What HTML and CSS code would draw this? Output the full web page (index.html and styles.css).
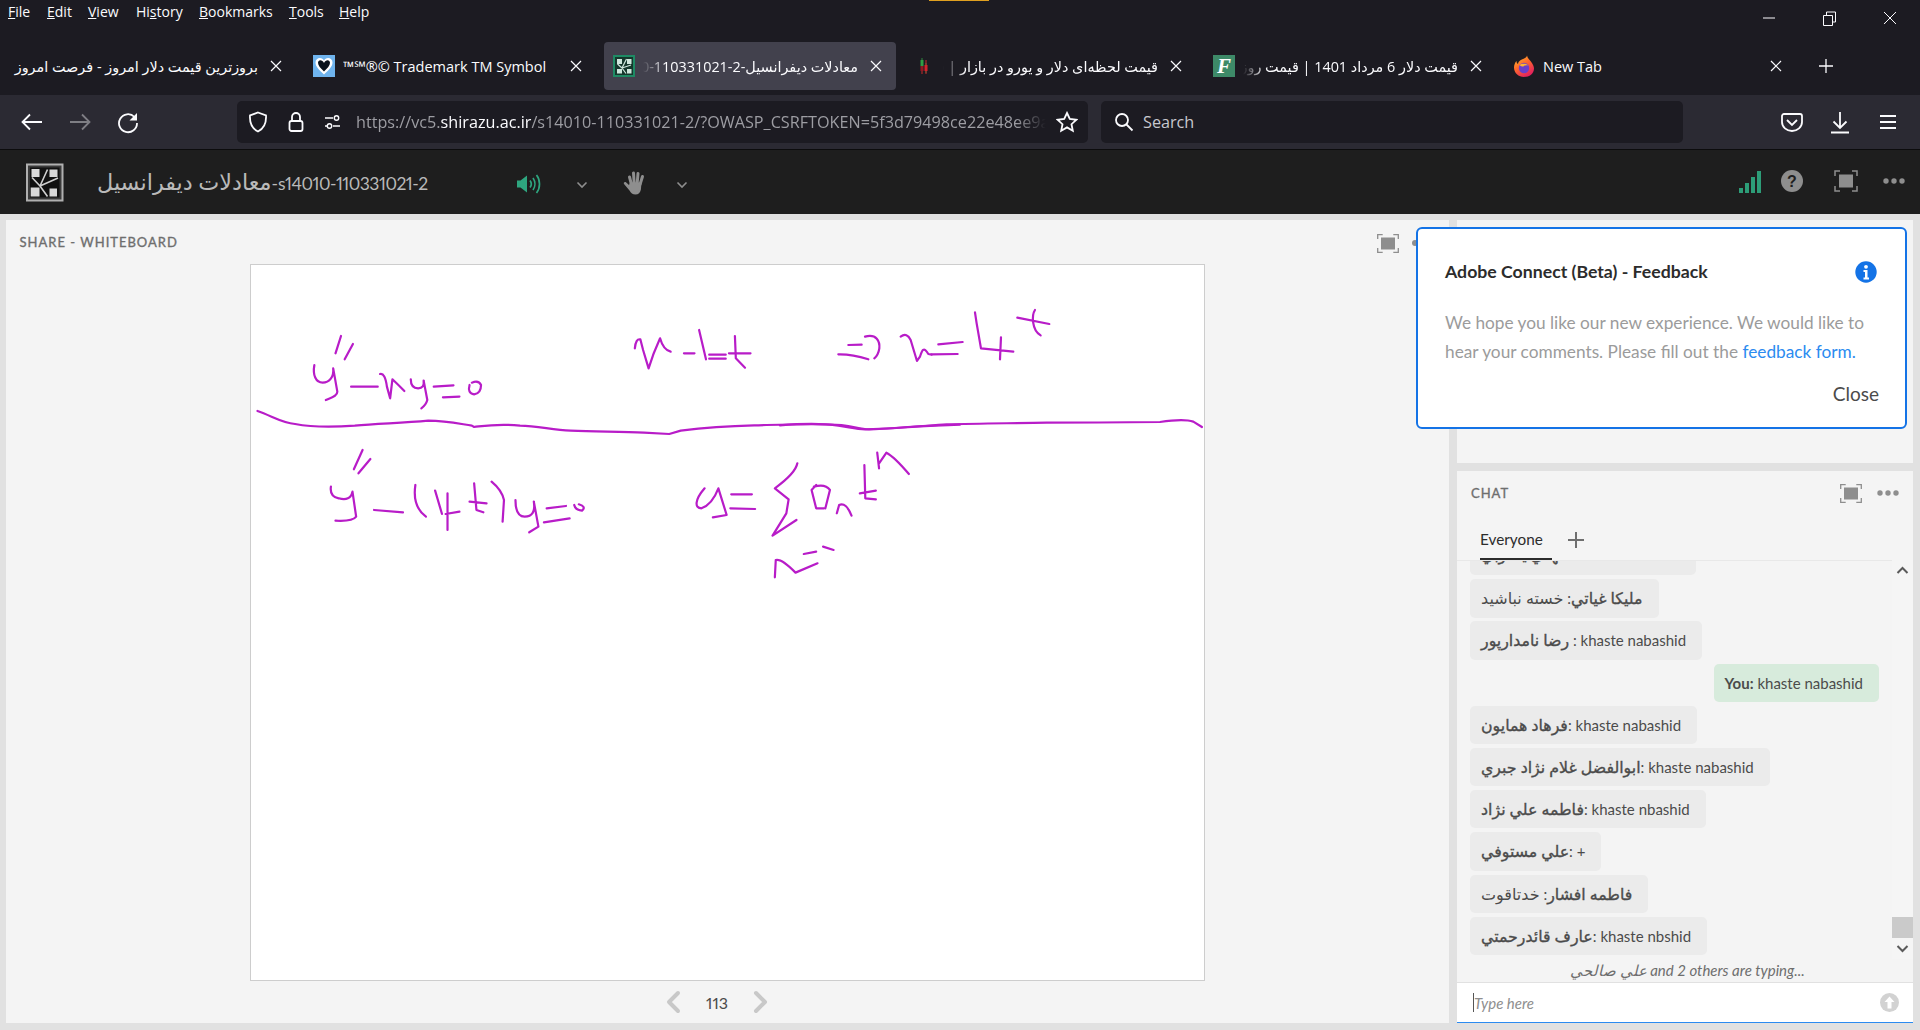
FILE: index.html
```html
<!DOCTYPE html>
<html lang="en">
<head>
<meta charset="utf-8">
<title>Adobe Connect</title>
<link rel="stylesheet" href="styles.css">
</head>
<body>
<div class="page">
  <div class="attention"></div>
  <div class="menubar">
    <nav class="menu">
      <span class="m-file"><u>F</u>ile</span><span class="m-edit"><u>E</u>dit</span><span class="m-view"><u>V</u>iew</span><span class="m-hist">Hi<u>s</u>tory</span><span class="m-book"><u>B</u>ookmarks</span><span class="m-tools"><u>T</u>ools</span><span class="m-help"><u>H</u>elp</span>
    </nav>
    <div class="winctl">
      <svg class="wbtn" viewBox="0 0 60 36"><path d="M23 18h12" class="w1"/></svg>
      <svg class="wbtn" viewBox="0 0 60 36"><path d="M23.500 15.500h9v10h-9zM26.500 15v-3h9v10h-3" class="w1"/></svg>
      <svg class="wbtn" viewBox="0 0 60 36"><path d="M24 12l12 12M36 12l-12 12" class="w1"/></svg>
    </div>
  </div>

  <div class="tabbar">
    <div class="tab">
      <div class="tab-title rtl fade">بروزترین قیمت دلار امروز - فرصت امروز</div>
      <svg class="tab-x" viewBox="0 0 12 12"><path d="M1 1l10 10M11 1L1 11"/></svg>
    </div>
    <div class="tab">
      <svg class="fav" viewBox="0 0 22 22"><rect width="22" height="22" fill="#6fb4ee"/><path d="M11 19.500C6 15 2.500 11.500 2.500 7.500 2.500 4.500 4.700 3 6.800 3 8.800 3 10.200 4 11 5.500 11.800 4 13.200 3 15.200 3 17.300 3 19.500 4.500 19.500 7.500 19.500 11.500 16 15 11 19.500z" fill="#fff"/><path d="M11 16.500C7.500 13.300 5 10.500 5 7.800 5 6 6.200 5.200 7.300 5.200 8.800 5.200 10.200 6.200 11 8 11.800 6.200 13.200 5.200 14.700 5.200 15.800 5.200 17 6 17 7.800 17 10.500 14.500 13.300 11 16.500z" fill="#08121c"/></svg>
      <div class="tab-title">™℠®© Trademark TM Symbol</div>
      <svg class="tab-x" viewBox="0 0 12 12"><path d="M1 1l10 10M11 1L1 11"/></svg>
    </div>
    <div class="tab active">
      <svg class="fav" viewBox="0 0 22 22"><rect width="22" height="22" fill="#1e8a64"/><rect x="2" y="2" width="18" height="18" fill="#16382d"/><path d="M4 4h5v5H4zM14 4h4.500v5H14zM4 14h5v4.500H4zM14 14h4.500v4.500H14z" fill="#cfe7dd"/><path d="M9 13L13.500 4M9 13l9-3M9 13L4.500 9M9 13l4 5.500" stroke="#cfe7dd" stroke-width="1.200" fill="none"/></svg>
      <div class="tab-title rtl fade">معادلات دیفرانسیل-s14010-110331021-2</div>
      <svg class="tab-x" viewBox="0 0 12 12"><path d="M1 1l10 10M11 1L1 11"/></svg>
    </div>
    <div class="tab">
      <svg class="fav" viewBox="0 0 22 22"><path d="M9 3v7M13 8v10" stroke="#2d8a3e" stroke-width="1"/><rect x="7.500" y="5" width="3" height="6" fill="#2f9e44"/><path d="M13 5v14M9 11v8" stroke="#c92a2a" stroke-width="1"/><rect x="11.500" y="10" width="3" height="6" fill="#d6222c"/><rect x="7.500" y="11" width="3" height="5" fill="#8f1a22"/></svg>
      <div class="tab-title rtl fade">قیمت لحظه‌ای دلار و یورو در بازار | قیمت روز</div>
      <svg class="tab-x" viewBox="0 0 12 12"><path d="M1 1l10 10M11 1L1 11"/></svg>
    </div>
    <div class="tab">
      <span class="fav fav-f">F</span>
      <div class="tab-title rtl fade">قیمت دلار 6 مرداد 1401 | قیمت روز ارز امروز</div>
      <svg class="tab-x" viewBox="0 0 12 12"><path d="M1 1l10 10M11 1L1 11"/></svg>
    </div>
    <div class="tab">
      <svg class="fav" viewBox="0 0 22 22"><defs><linearGradient id="ffo" x1="0" y1="0" x2="0.600" y2="1"><stop offset="0" stop-color="#ffc62b"/><stop offset=".5" stop-color="#ff6a2b"/><stop offset="1" stop-color="#e3215e"/></linearGradient></defs><path d="M14 .500c.500 2.500 2 3.500 3.500 5.500 2.500 3 3.500 5.500 3.500 7.500C21 18.500 16.500 22 11 22 5.500 22 1 18 1 12.500 1 10 2 7.500 3.500 6c0 1.500.500 2.500 1.500 3C5.500 5.500 9 4.500 11 3.500 12.500 2.800 13.800 2 14 .500z" fill="url(#ffo)"/><circle cx="11" cy="13" r="5.200" fill="#6b3fc9"/><path d="M6.500 10c2-1.500 6.500-2 9 .5-1.500-.500-4-.500-5 1-1.500 0-3-.500-4-1.500z" fill="#ffb52b"/></svg>
      <div class="tab-title">New Tab</div>
      <svg class="tab-x" viewBox="0 0 12 12"><path d="M1 1l10 10M11 1L1 11"/></svg>
    </div>
    <svg class="newtab" viewBox="0 0 16 16"><path d="M8 1v14M1 8h14"/></svg>
  </div>

  <div class="toolbar">
    <svg class="navbtn" viewBox="0 0 48 24"><path d="M34 12H15M22 4.500L14.500 12l7.500 7.500" class="tb"/></svg>
    <svg class="navbtn dim" viewBox="0 0 48 24"><path d="M14 12h19M26 4.500l7.500 7.500-7.500 7.500" class="tb"/></svg>
    <svg class="navbtn" viewBox="0 0 48 24"><path d="M30.500 7A9 9 0 1 0 33 13" class="tb"/><path d="M33 3v7.500h-7.500z" fill="#fbfbfe"/></svg>
    <div class="urlbar">
      <svg class="u-shield" viewBox="0 0 20 22"><path d="M10 1.500l8 3c.5 8-2 13-8 16-6-3-8.500-8-8-16z" class="tb"/></svg>
      <svg class="u-lock" viewBox="0 0 16 22"><path d="M4 10V6a4 4 0 0 1 8 0v4" class="tb"/><rect x="1.500" y="10" width="13" height="10" rx="2" class="tb"/></svg>
      <svg class="u-perm" viewBox="0 0 16 16"><path d="M1 4h8M1 12h2M9 12h7" class="tb t15"/><circle cx="12.500" cy="4" r="2.200" class="tb t15"/><circle cx="5.500" cy="12" r="2.200" class="tb t15"/></svg>
      <div class="url">https://vc5.<b>shirazu.ac.ir</b>/s14010-110331021-2/?OWASP_CSRFTOKEN=5f3d79498ce22e48ee9a31c</div>
      <svg class="u-star" viewBox="0 0 22 22"><path d="M11 2l2.800 6 6.500.8-4.800 4.400 1.300 6.500L11 16.400l-5.800 3.300 1.300-6.500L1.700 8.800 8.200 8z" class="tb"/></svg>
    </div>
    <div class="search">
      <svg class="s-lens" viewBox="0 0 20 20"><circle cx="8" cy="8" r="6" class="tb"/><path d="M12.500 12.500L18.500 18.500" class="tb"/></svg>
      <span>Search</span>
    </div>
    <div class="tb-right">
      <svg class="navbtn" viewBox="0 0 48 24"><path d="M16 4h16c1 0 2 .8 2 2v6c0 5-4.500 9-10 9s-10-4-10-9V6c0-1.200 1-2 2-2z" class="tb"/><path d="M19 10l5 5 5-5" class="tb"/></svg>
      <svg class="navbtn" viewBox="0 0 48 24"><path d="M24 2v16M17.500 11.500L24 18l6.500-6.500M15 22.500h18" class="tb"/></svg>
      <svg class="navbtn" viewBox="0 0 48 24"><path d="M16 6h16M16 12h16M16 18h16" class="tb"/></svg>
    </div>
  </div>

  <header class="acbar">
    <svg class="aclogo" viewBox="0 0 38 39"><rect x="1" y="1.500" width="35.500" height="36" fill="#3a3a3a" stroke="#b0b0b0" stroke-width="2"/><rect x="4" y="4.500" width="29.500" height="30" fill="#111"/><path d="M5.500 6h8v8h-8zM23.500 6.500h8v7.500h-8zM4.700 24.500h8.800v9H4.700zM23.500 25.500h7.500v8h-7.500z" fill="#d8d8d8"/><path d="M14 23L21.500 6.500M14 23L32 15M14 23L6 14.500M14 23L21.500 33.500" stroke="#cfcfcf" stroke-width="1.600" fill="none"/></svg>
    <div class="actitle"><span class="ac-ar">معادلات دیفرانسیل</span><span class="ac-num">-s14010-110331021-2</span></div>
    <svg class="speaker" viewBox="0 0 25 20"><path d="M1 6.500h3.500L11 1.500v17l-6.500-5H1z" fill="#2ea67f"/><path d="M14 6.500c1.500 2 1.500 5 0 7M17 4c2.500 3.500 2.500 8.500 0 12M20.500 1c4 5 4 13 0 18" fill="none" stroke="#2ea67f" stroke-width="1.700"/></svg>
    <svg class="chev c1" viewBox="0 0 12 8"><path d="M1.500 1.500L6 6l4.500-4.500"/></svg>
    <svg class="hand" viewBox="0 0 24 24"><path d="M6.500 6l2 7.500M10.500 2l.7 10M15 2.500l-.8 10M19.500 5.500L17 13.500" stroke="#8e8e8e" stroke-width="3" stroke-linecap="round" fill="none"/><path d="M7 11.500h11.500l-.6 7c-.5 3-2.500 5-5.400 5-3 0-4.500-1.500-6-4L1 13c-.8-1.500 1-2.700 2.200-1.500L6 14z" fill="#8e8e8e"/></svg>
    <svg class="chev c2" viewBox="0 0 12 8"><path d="M1.500 1.500L6 6l4.500-4.500"/></svg>
    <div class="acright">
      <svg class="bars" viewBox="0 0 22 22"><path d="M0 17h4v5H0zM6 12h4v10H6zM12 6h4v16h-4zM18 0h4v22h-4z" fill="#2d9d78"/></svg>
      <svg class="help" viewBox="0 0 22 22"><circle cx="11" cy="11" r="11" fill="#8e8e8e"/><text x="11" y="16.500" class="help-q">?</text></svg>
      <svg class="fs-dark" viewBox="0 0 24 22"><path d="M1 6V1h5M18 1h5v5M23 16v5h-5M6 21H1v-5" fill="none" stroke="#8e8e8e" stroke-width="1.500"/><rect x="5" y="4.500" width="14" height="13" fill="#8e8e8e"/></svg>
      <svg class="dots-dark" viewBox="0 0 22 6"><circle cx="3" cy="3" r="2.700"/><circle cx="11" cy="3" r="2.700"/><circle cx="19" cy="3" r="2.700"/></svg>
    </div>
  </header>

  <main class="stage">
    <section class="sharepod">
      <div class="podhead">
        <span class="podlabel">SHARE - WHITEBOARD</span>
        <svg class="fs" viewBox="0 0 22 19"><path d="M.7 5V.7h5M16.300.7h5V5M21.300 14v4.300h-5M5.700 18.300h-5V14" fill="none" stroke="#8e8e8e" stroke-width="1.300"/><rect x="4" y="3.500" width="14" height="12" fill="#8e8e8e"/></svg>
        <span class="poddots"></span>
      </div>
      <div class="board">
        <svg class="ink" viewBox="251 265 953 715">
          <g transform="translate(240 260) scale(0.4591 0.3333)">
            <path d="M220 228L208 280M246 252L228 298"/>
            <path d="M162 315C158 345 165 368 180 368C195 368 205 350 203 325L212 395C212 408 200 412 187 420"/>
            <path d="M242 380L300 380"/>
            <path d="M305 342Q316 338 320 380L327 415L332 358Q345 375 358 393"/>
            <path d="M372 358Q372 385 388 385Q402 385 400 362L408 420Q405 435 395 445"/>
            <path d="M422 380L465 376M442 412L478 410"/>
            <path d="M500 375Q495 400 510 403Q525 400 525 375Q520 360 505 368"/>
            <path d="M38 453C70 468 90 488 120 492C150 500 200 502 250 497C300 490 350 490 410 482C450 482 480 492 505 497L510 501C530 498 560 490 610 497C650 498 680 510 720 512C780 515 830 515 880 518L935 522L960 512C1000 505 1060 498 1120 496C1180 494 1260 490 1310 495C1340 500 1350 507 1370 508C1420 507 1480 497 1568 494"/>
            <path d="M860 265Q862 235 872 238L878 270L890 325Q900 280 915 235Q922 270 938 275"/>
            <path d="M967 280L990 280M1000 210L1015 298M1022 284L1058 284M1022 296L1058 296"/>
            <path d="M1065 280L1112 280M1078 228L1080 295L1100 323"/>
            <path d="M267 570L248 628M284 597L258 640"/>
            <path d="M198 680Q195 710 215 715Q240 725 245 695L253 770Q245 785 208 782"/>
            <path d="M292 750L355 757M382 675Q375 740 405 770M425 692L440 762M452 700L452 810M448 762L478 755"/>
            <path d="M510 670L515 750L530 757M500 725L537 730M548 665Q570 690 575 720L572 785"/>
            <path d="M600 720Q600 770 620 770Q645 770 640 725L650 800L630 817"/>
            <path d="M668 745L710 738M662 787L718 775M728 735Q730 750 745 752Q755 740 738 733"/>
            <path d="M1012 685C990 720 990 745 1005 745C1025 735 1035 710 1042 685L1060 765L1030 772"/>
            <path d="M1070 703L1115 703M1068 745L1122 747"/>
            <path d="M1214 610Q1210 640 1165 685L1195 718L1190 760L1160 827L1212 780"/>
            <path d="M1250 680Q1275 670 1285 690L1275 745M1255 675L1245 690L1255 745L1272 745"/>
            <path d="M1300 760L1305 735Q1320 725 1332 767"/>
            <path d="M1360 615L1362 715L1385 718M1350 700L1385 692"/>
            <path d="M1388 578L1392 625M1392 610L1408 578Q1425 590 1457 642"/>
            <path d="M1165 952L1167 900Q1180 895 1210 938L1258 910M1228 882L1255 875M1270 860L1293 870"/>
          </g>
          <g transform="translate(780 280) scale(0.3333)">
            <path d="M0 436C50 432 130 430 175 437C210 442 230 448 255 448C300 448 400 440 500 433C600 430 700 430 800 428C900 428 1050 427 1140 426C1180 420 1220 418 1240 425L1266 441"/>
            <path d="M205 195L245 194M175 223C210 222 240 230 265 238"/>
            <path d="M255 170C290 160 300 185 298 205Q295 225 283 235"/>
            <path d="M362 170C375 160 385 165 392 180L411 243L420 230C425 215 430 195 445 222L455 224"/>
            <path d="M475 193L548 186M455 223L533 222"/>
            <path d="M585 97L590 130L603 205L700 215M663 172L660 238"/>
            <path d="M712 113L808 132M765 90C755 105 755 150 782 166"/>
          </g>
        </svg>
      </div>
      <div class="pager">
        <svg class="pg" viewBox="0 0 16 24"><path d="M13 3L4 12l9 9"/></svg>
        <span class="pgnum">113</span>
        <svg class="pg" viewBox="0 0 16 24"><path d="M3 3l9 9-9 9"/></svg>
      </div>
    </section>

    <aside class="rightcol">
      <div class="emptypod"></div>
      <div class="dialog">
        <div class="dlg-head">
          <h2>Adobe Connect (Beta) - Feedback</h2>
          <svg class="info" viewBox="0 0 22 22"><circle cx="11" cy="11" r="10.700" fill="#1473e6"/><circle cx="11" cy="5.800" r="1.900" fill="#fff"/><path d="M8.500 9h4v7.500h1.500v2H8.500v-2H10V11H8.500z" fill="#fff"/></svg>
        </div>
        <p class="dlg-body">We hope you like our new experience. We would like to hear your comments. Please fill out the <a>feedback form.</a></p>
        <div class="dlg-close">Close</div>
      </div>
      <section class="chatpod">
        <div class="chathead">
          <span class="podlabel">CHAT</span>
          <svg class="fs" viewBox="0 0 22 19"><path d="M.7 5V.7h5M16.300.7h5V5M21.300 14v4.300h-5M5.700 18.300h-5V14" fill="none" stroke="#8e8e8e" stroke-width="1.300"/><rect x="4" y="3.500" width="14" height="12" fill="#8e8e8e"/></svg>
          <svg class="dots" viewBox="0 0 22 6"><circle cx="3" cy="3" r="2.700"/><circle cx="11" cy="3" r="2.700"/><circle cx="19" cy="3" r="2.700"/></svg>
        </div>
        <div class="chattabs">
          <span class="ctab">Everyone</span>
          <svg class="ctab-plus" viewBox="0 0 16 16"><path d="M8 0v16M0 8h16"/></svg>
        </div>
        <div class="chatbody">
          <div class="msgs">
            <div class="msg clipped"><b>مهدي يعقوبي</b>: khaste nabashid</div>
            <div class="msg"><b>مليكا غياتي</b>: <span class="ar">خسته نباشيد</span></div>
            <div class="msg"><b>رضا نامدارپور</b> : khaste nabashid</div>
            <div class="msg mine"><b class="you">You:</b> khaste nabashid</div>
            <div class="msg"><b>فرهاد همايون</b>: khaste nabashid</div>
            <div class="msg"><b>ابوالفضل غلام نژاد جبري</b>: khaste nabashid</div>
            <div class="msg"><b>فاطمه علي نژاد</b>: khaste nbashid</div>
            <div class="msg"><b>علي مستوفي</b>: +</div>
            <div class="msg"><b>فاطمه افشار</b>: <span class="ar">خدتاقوت</span></div>
            <div class="msg"><b>عارف قائدرحمتي</b>: khaste nbshid</div>
          </div>
          <div class="sbar">
            <svg class="sarrow" viewBox="0 0 21 21"><path d="M5.500 13l5-5 5 5"/></svg>
            <div class="sthumb"></div>
            <svg class="sarrow" viewBox="0 0 21 21"><path d="M5.500 8l5 5 5-5"/></svg>
          </div>
        </div>
        <div class="typing">علي صالحي and 2 others are typing...</div>
        <div class="chatinput">
          <span class="caret"></span><span class="placeholder">Type here</span>
          <svg class="send" viewBox="0 0 19 19"><circle cx="9.500" cy="9.500" r="9.500" fill="#d2d2d2"/><path d="M9.500 3.500l5 5.500h-3v6.500h-4V9h-3z" fill="#fff"/></svg>
        </div>
      </section>
    </aside>
  </main>
</div>
</body>
</html>
```
FILE: styles.css
```css
* { box-sizing: border-box; }
html, body { margin: 0; padding: 0; background: #1c1b22; }
.page { width: 1920px; height: 1030px; display: flex; flex-direction: column; overflow: hidden; position: relative; font-family: "Open Sans", "DejaVu Sans", sans-serif; color: #fbfbfe; }
.attention { position: absolute; left: 929px; top: 0; width: 60px; height: 1px; background: #e0a020; }

/* menu */
.menubar { height: 42px; display: flex; justify-content: space-between; flex: none; }
.menu { display: flex; padding: 2px 0 0 8px; font-size: 14px; line-height: 20px; gap: 0; }
.menu span { display: block; }
.m-file { width: 39px; } .m-edit { width: 41px; } .m-view { width: 48px; } .m-hist { width: 63px; } .m-book { width: 90px; } .m-tools { width: 50px; }
.winctl { display: flex; padding-right: 0; }
.wbtn { width: 60px; height: 36px; display: block; }
.w1 { fill: none; stroke: #fbfbfe; stroke-width: 1; }

/* tabs */
.tabbar { height: 53px; display: flex; align-items: flex-start; flex: none; }
.tab { width: 292px; height: 48px; margin: 0 4px; padding: 0 14px 0 9px; display: flex; align-items: center; border-radius: 4px; font-size: 14.500px; }
.tab.active { background: #42414d; }
.fav { width: 22px; height: 22px; flex: none; margin-right: 8px; display: block; }
.fav-f { background: #3d8a68; color: #fff; font-family: "Liberation Serif", serif; font-style: italic; font-weight: 700; font-size: 21px; line-height: 22px; text-align: center; }
.tab-title { flex: 1; min-width: 0; white-space: nowrap; overflow: hidden; }
.rtl { direction: rtl; text-align: right; font-size: 14.400px; }
.fade { -webkit-mask-image: linear-gradient(to right, transparent 0, #000 22px); mask-image: linear-gradient(to right, transparent 0, #000 22px); }
.tab:first-child .fade { -webkit-mask-image: none; mask-image: none; }
.tab-x { width: 12px; height: 12px; flex: none; margin-left: 12px; }
.tab-x path { stroke: #fbfbfe; stroke-width: 1.200; fill: none; }
.newtab { width: 16px; height: 16px; margin: 16px 0 0 18px; }
.newtab path { stroke: #fbfbfe; stroke-width: 1.300; fill: none; }

/* toolbar */
.toolbar { height: 55px; background: #2b2a33; border-bottom: 1px solid #0c0c0d; display: flex; align-items: center; padding: 0 0 1px 8px; flex: none; }
.navbtn { width: 48px; height: 24px; flex: none; display: block; }
.navbtn.dim { opacity: .4; }
.tb { fill: none; stroke: #fbfbfe; stroke-width: 1.800; }
.t15 { stroke-width: 1.400; }
.urlbar { width: 851px; height: 42px; margin-left: 85px; background: #1c1b22; border-radius: 5px; display: flex; align-items: center; padding: 0 10px 0 11px; }
.u-shield { width: 20px; height: 22px; flex: none; }
.u-lock { width: 16px; height: 22px; margin-left: 20px; flex: none; }
.u-perm { width: 16px; height: 16px; margin-left: 20px; flex: none; }
.url { width: 690px; margin: 0 10px 0 16px; overflow: hidden; white-space: nowrap; font-size: 16.200px; color: #9d9da3; -webkit-mask-image: linear-gradient(to left, transparent 0, #000 30px); mask-image: linear-gradient(to left, transparent 0, #000 30px); }
.url b { font-weight: 400; color: #fbfbfe; }
.u-star { width: 22px; height: 22px; flex: none; }
.search { width: 582px; height: 42px; margin-left: 13px; background: #1c1b22; border-radius: 5px; display: flex; align-items: center; padding-left: 13px; font-size: 16.200px; color: #c8c8ce; }
.s-lens { width: 20px; height: 20px; margin-right: 9px; }
.tb-right { display: flex; margin-left: 85px; }

/* adobe header */
.acbar { height: 64px; background: #1e1e1e; display: flex; align-items: center; padding-left: 26px; flex: none; }
.aclogo { width: 38px; height: 39px; flex: none; }
.actitle { width: 419px; margin-left: 33px; padding-bottom: 2px; font-family: "Lato", "DejaVu Sans", sans-serif; color: #b9b9b9; white-space: nowrap; }
.ac-ar { font-size: 22.300px; }
.ac-num { font-size: 17.500px; letter-spacing: -.5px; font-variant-numeric: proportional-nums; }
.speaker { width: 25px; height: 20px; flex: none; margin-top: 3px; }
.chev { width: 12px; height: 8px; flex: none; margin-top: 5px; }
.chev path { fill: none; stroke: #8e8e8e; stroke-width: 1.600; }
.c1 { margin-left: 35px; }
.hand { width: 24px; height: 24px; margin-left: 35px; flex: none; margin-top: 1px; }
.c2 { margin-left: 29px; }
.acright { margin-left: auto; display: flex; align-items: center; padding-right: 15px; padding-bottom: 3px; }
.bars { width: 22px; height: 22px; display: block; margin-top: 2px; }
.help { width: 22px; height: 22px; margin-left: 20px; display: block; }
.help-q { font-family: "Liberation Sans", sans-serif; font-weight: 700; font-size: 16px; fill: #1e1e1e; text-anchor: middle; }
.fs-dark { width: 24px; height: 22px; margin-left: 31px; display: block; }
.dots-dark { width: 22px; height: 6px; margin-left: 25px; display: block; fill: #8e8e8e; }

/* stage */
.stage { flex: 1; min-height: 0; background: #e1e1e1; display: flex; gap: 8px; padding: 6px 7px 7px 6px; font-family: "Lato", "DejaVu Sans", sans-serif; color: #4b4b4b; }
.sharepod { width: 1443px; background: #f4f4f4; display: flex; flex-direction: column; }
.podhead { height: 44px; display: flex; align-items: center; padding: 0 0 0 13.500px; flex: none; }
.podlabel { font-size: 13px; font-weight: 400; letter-spacing: 1px; color: #6e6e6e; -webkit-text-stroke: .35px #6e6e6e; }
.fs { width: 22px; height: 19px; display: block; flex: none; }
.podhead .fs { margin-left: auto; margin-right: 13px; margin-top: 2px; }
.poddots { width: 6px; height: 6px; border-radius: 50%; background: #8e8e8e; margin-top: 2px; margin-right: 31px; }
.board { width: 955px; height: 717px; margin-left: 244px; background: #fff; border: 1px solid #cdcdcd; flex: none; }
.ink { display: block; width: 953px; height: 715px; }
.ink path { fill: none; stroke: #b81cc8; stroke-width: 2.200; stroke-linecap: round; stroke-linejoin: round; vector-effect: non-scaling-stroke; }
.pager { flex: 1; display: flex; align-items: center; justify-content: center; margin-left: -20px; padding-right: 1px; }
.pg { width: 16px; height: 24px; }
.pg path { fill: none; stroke: #c8c8c8; stroke-width: 4; stroke-linecap: round; stroke-linejoin: round; }
.pgnum { width: 72px; text-align: center; font-size: 16px; font-variant-numeric: proportional-nums; color: #4b4b4b; }

/* right column */
.rightcol { width: 456px; display: flex; flex-direction: column; gap: 8px; position: relative; }
.emptypod { height: 243px; background: #f4f4f4; flex: none; }
.dialog { position: absolute; left: -41px; top: 7px; width: 491px; height: 202px; background: #fff; border: 2px solid #1473e6; border-radius: 6px; padding: 0 26px 0 27px; }
.dlg-head { display: flex; align-items: center; justify-content: space-between; height: 34px; margin-top: 26px; }
.dlg-head h2 { margin: 0; font-size: 17.700px; font-weight: 700; color: #2c2c2c; line-height: 34px; }
.info { width: 22px; height: 22px; margin-right: 2px; }
.dlg-body { margin: 19px 0 0; font-size: 17.250px; line-height: 29px; color: #9b9b9b; }
.dlg-body a { color: #2b8bf0; }
.dlg-close { text-align: right; font-size: 19px; line-height: 26px; color: #4b4b4b; margin-top: 15px; }

/* chat */
.chatpod { flex: 1; min-height: 0; background: #f4f4f4; display: flex; flex-direction: column; }
.chathead { height: 44px; display: flex; align-items: center; padding: 0 14px 0 14px; flex: none; }
.chathead .fs { margin-left: auto; }
.dots { width: 22px; height: 6px; fill: #8e8e8e; margin-left: 15px; display: block; }
.chattabs { height: 45px; display: flex; align-items: center; padding-left: 23px; flex: none; }
.ctab { width: 72px; height: 45px; padding-top: 9px; line-height: 30px; font-size: 15.300px; color: #2c2c2c; border-bottom: 2px solid #2c2c2c; }
.ctab-plus { width: 16px; height: 16px; margin-left: 16px; margin-top: 4px; }
.ctab-plus path { stroke: #6e6e6e; stroke-width: 2; fill: none; }
.chatbody { height: 399px; display: flex; flex: none; }
.msgs { flex: 1; min-width: 0; overflow: hidden; display: flex; flex-direction: column; justify-content: flex-end; align-items: flex-start; gap: 3.900px; padding: 0 13px 4px 13px; border-top: 1px solid #e8e8e8; }
.msg { flex: none; height: 38.300px; line-height: 38px; padding: 0 16px 0 11px; border-radius: 5px; background: #ebebeb; font-size: 15px; color: #4b4b4b; white-space: nowrap; }
.msg.clipped { line-height: 33px; }
.msg b { font-weight: 400; font-size: 15.800px; -webkit-text-stroke: .35px #4b4b4b; }
.msg b.you { font-weight: 700; font-size: 15px; -webkit-text-stroke: 0; }
.msg .ar { font-size: 16px; }
.msg.mine { align-self: flex-end; background: #d7ebdc; }
.sbar { width: 21px; display: flex; flex-direction: column; background: #f5f5f5; flex: none; }
.sarrow { width: 21px; height: 21px; display: block; flex: none; }
.sarrow path { fill: none; stroke: #5a5a5a; stroke-width: 2; }
.sthumb { height: 21px; margin-top: auto; background: #cacaca; flex: none; }
.typing { height: 23px; line-height: 22px; text-align: center; font-size: 15px; font-style: italic; color: #6e6e6e; padding-left: 5px; flex: none; white-space: nowrap; }
.chatinput { flex: 1; background: #fff; border-top: 1px solid #e1e1e1; border-bottom: 1px solid #2b8bf0; display: flex; align-items: center; padding: 0 14px 0 16px; }
.caret { width: 1px; height: 19px; background: #555; flex: none; }
.placeholder { font-size: 15px; font-style: italic; color: #8e8e8e; }
.send { width: 19px; height: 19px; margin-left: auto; }
```
